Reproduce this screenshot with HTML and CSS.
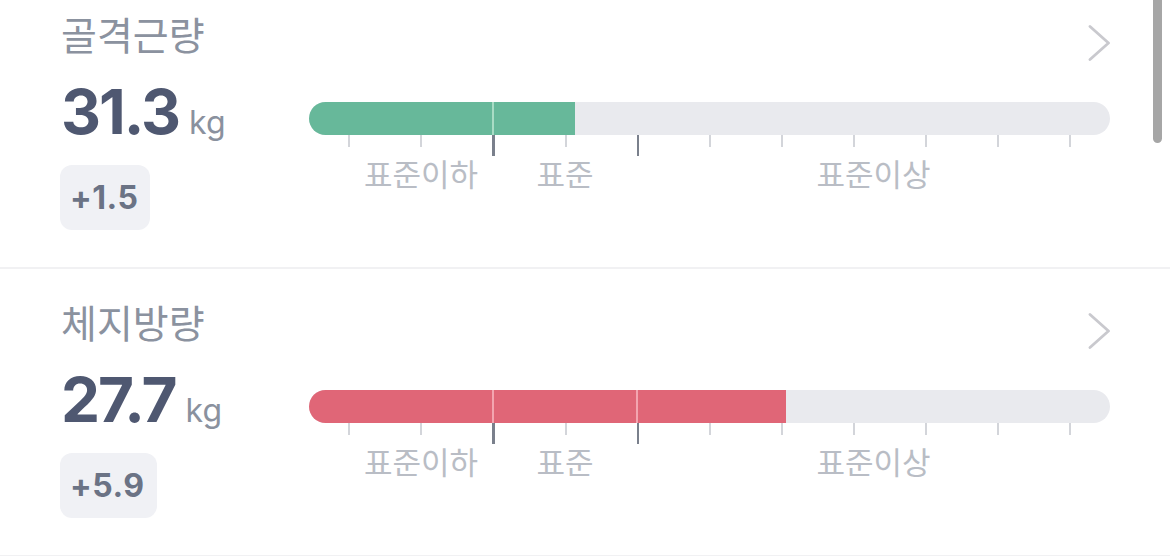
FILE: index.html
```html
<!DOCTYPE html>
<html lang="ko">
<head>
<meta charset="utf-8">
<title>체성분</title>
<link rel="stylesheet" href="styles.css">
</head>
<body>
<div class="scrollbar"></div>
<main class="list">
  <section class="metric">
    <div class="head">
      <h2 class="title">골격근량</h2>
      <svg class="chev" width="22" height="36" viewBox="0 0 22 36" aria-hidden="true"><polyline points="2,1.5 20.5,18 2,34.5" fill="none" stroke="#c9c9ce" stroke-width="2.8" stroke-linecap="round" stroke-linejoin="round"/></svg>
    </div>
    <div class="body">
      <div class="left">
        <div class="value"><span class="num">31.3</span><span class="unit">kg</span></div>
        <div class="badge">+1.5</div>
      </div>
      <div class="chart">
        <div class="bar">
          <div class="fill green" style="width:266px"><i class="mark m1"></i><i class="mark m2"></i></div>
        </div>
        <div class="ticks">
          <i class="tick"></i><i class="tick"></i><i class="tick dark"></i><i class="tick"></i><i class="tick dark"></i><i class="tick"></i><i class="tick"></i><i class="tick"></i><i class="tick"></i><i class="tick"></i><i class="tick"></i>
        </div>
        <div class="labels"><span>표준이하</span><span>표준</span><span>표준이상</span></div>
      </div>
    </div>
  </section>
  <section class="metric">
    <div class="head">
      <h2 class="title">체지방량</h2>
      <svg class="chev" width="22" height="36" viewBox="0 0 22 36" aria-hidden="true"><polyline points="2,1.5 20.5,18 2,34.5" fill="none" stroke="#c9c9ce" stroke-width="2.8" stroke-linecap="round" stroke-linejoin="round"/></svg>
    </div>
    <div class="body">
      <div class="left">
        <div class="value"><span class="num">27.7</span><span class="unit">kg</span></div>
        <div class="badge">+5.9</div>
      </div>
      <div class="chart">
        <div class="bar">
          <div class="fill red" style="width:477px"><i class="mark m1"></i><i class="mark m2"></i></div>
        </div>
        <div class="ticks">
          <i class="tick"></i><i class="tick"></i><i class="tick dark"></i><i class="tick"></i><i class="tick dark"></i><i class="tick"></i><i class="tick"></i><i class="tick"></i><i class="tick"></i><i class="tick"></i><i class="tick"></i>
        </div>
        <div class="labels"><span>표준이하</span><span>표준</span><span>표준이상</span></div>
      </div>
    </div>
  </section>
</main>
</body>
</html>
```
FILE: styles.css
```css
* { box-sizing: border-box; }
html, body { margin: 0; padding: 0; background: #ffffff; overflow: hidden; }
body { font-family: "Noto Sans CJK KR", "Noto Sans", sans-serif; }

.scrollbar {
  position: fixed;
  right: 8px;
  top: -20px;
  width: 9px;
  height: 163px;
  border-radius: 5px;
  background: #a6a6a6;
}

.list { margin-top: -19px; }

.metric {
  padding: 30px 60px 0 60px;
  height: 288px;
  border-bottom: 2px solid #f1f1f3;
}

.head {
  display: flex;
  justify-content: space-between;
  align-items: flex-start;
  height: 50px;
}
.title {
  margin: 0 0 0 1px;
  font-size: 39px;
  line-height: 44px;
  font-weight: 400;
  color: #8b929f;
}
.chev { margin-top: 14px; display: block; flex: none; }

.body {
  display: grid;
  grid-template-columns: 249px 801px;
  margin-top: 20px;
}

.value {
  font-family: Inter, "Liberation Sans", sans-serif;
  line-height: 62px;
  height: 62px;
  white-space: nowrap;
  padding-left: 1px;
}
.num {
  font-size: 62px;
  font-weight: 700;
  letter-spacing: -2px;
  color: #4f5871;
}
.unit {
  font-size: 32px;
  font-weight: 400;
  color: #8a919e;
  margin-left: 10px;
}

.badge {
  display: inline-flex;
  align-items: center;
  height: 65px;
  margin-top: 22px;
  padding: 0 12px 0 10px;
  border-radius: 12px;
  background: #f0f1f5;
  font-family: Inter, "Liberation Sans", sans-serif;
  font-size: 32px;
  font-weight: 700;
  letter-spacing: 0.5px;
  color: #6b7385;
}

.chart { padding-top: 21px; }
.bar {
  height: 33px;
  border-radius: 16.5px;
  background: #e9eaee;
  overflow: hidden;
  display: flex;
}
.fill { position: relative; height: 100%; overflow: hidden; }
.fill.green { background: #67b89a; }
.fill.red { background: #e06677; }
.mark { position: absolute; top: 0; bottom: 0; width: 2px; }
.mark.m1 { left: 183px; }
.mark.m2 { left: 327px; }
.green .mark { background: #a9dcc5; }
.red .mark { background: #f3a5b0; }

.ticks {
  display: flex;
  align-items: flex-start;
  gap: 70px;
  padding-left: 39px;
  height: 21px;
}
.tick { display: block; width: 2px; height: 12px; background: #d3d5da; }
.tick.dark { width: 2.5px; height: 21px; background: #7a808c; }

.labels {
  display: grid;
  grid-template-columns: 184px 144px 473px;
  font-size: 31px;
  line-height: 34px;
  color: #b9bdc5;
  text-align: center;
}
.labels span:first-child { padding-left: 40px; }
```
